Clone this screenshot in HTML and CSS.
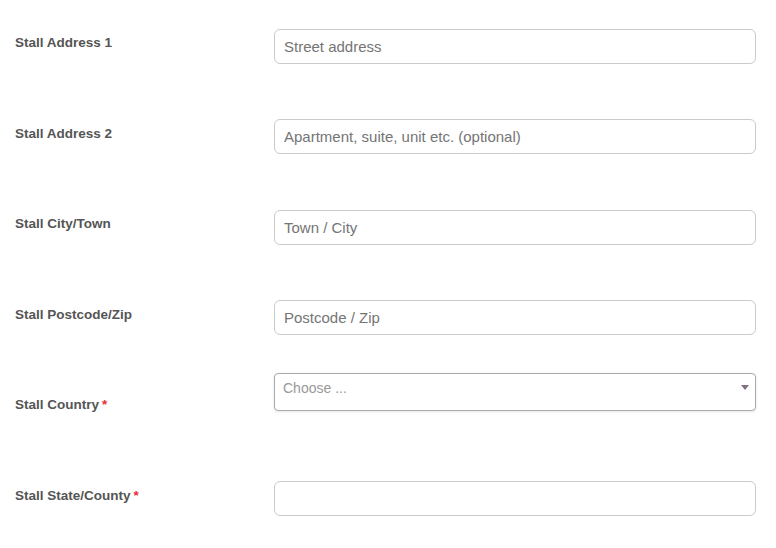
FILE: index.html
```html
<!DOCTYPE html>
<html lang="en">
<head>
  <meta charset="UTF-8">
  <title>Stall Address</title>
  <link rel="stylesheet" href="styles.css">
</head>
<body>
<form class="stall-form">
  <div class="form-row">
    <label for="addr1">Stall Address 1</label>
    <input type="text" id="addr1" placeholder="Street address">
  </div>
  <div class="form-row">
    <label for="addr2">Stall Address 2</label>
    <input type="text" id="addr2" placeholder="Apartment, suite, unit etc. (optional)">
  </div>
  <div class="form-row">
    <label for="city">Stall City/Town</label>
    <input type="text" id="city" placeholder="Town / City">
  </div>
  <div class="form-row">
    <label for="zip">Stall Postcode/Zip</label>
    <input type="text" id="zip" placeholder="Postcode / Zip">
  </div>
  <div class="form-row">
    <label>Stall Country<span class="required">*</span></label>
    <div class="select-box">
      <span class="select-placeholder">Choose ...</span>
      <b class="select-arrow"></b>
    </div>
  </div>
  <div class="form-row">
    <label for="state">Stall State/County<span class="required">*</span></label>
    <input type="text" id="state">
  </div>
</form>
</body>
</html>
```

FILE: styles.css
```css
body {
  margin: 0;
  padding: 28.8px 20px 0 15px;
  background: #fff;
  font-family: "Liberation Sans", Arial, sans-serif;
}

.form-row {
  display: grid;
  grid-template-columns: 259px 1fr;
  align-items: start;
  height: 90.5px;
}

.form-row label {
  margin-top: 4.5px;
  line-height: 20px;
  font-size: 13.5px;
  font-weight: bold;
  color: #555;
}

.required {
  margin-left: 3px;
  color: #ee2a3c;
}

input {
  box-sizing: border-box;
  width: 100%;
  height: 35px;
  margin: 0;
  padding: 0 9px;
  border: 1px solid #cacaca;
  border-radius: 6px;
  font-family: inherit;
  font-size: 15px;
  color: #444;
  outline: none;
}

input::placeholder {
  color: #757575;
}

.select-box {
  position: relative;
  box-sizing: border-box;
  height: 38px;
  margin-top: -18px;
  padding: 0 24px 0 8px;
  border: 1px solid #aaa;
  border-radius: 4px;
  background: #fff;
  box-shadow: 0 1px 3px rgba(0, 0, 0, 0.1);
}

.select-placeholder {
  display: block;
  line-height: 28px;
  font-size: 14px;
  color: #999;
}

.select-arrow {
  position: absolute;
  top: 11px;
  right: 6px;
  width: 0;
  height: 0;
  border-top: 5px solid #7f717f;
  border-left: 4px solid transparent;
  border-right: 4px solid transparent;
}
```
